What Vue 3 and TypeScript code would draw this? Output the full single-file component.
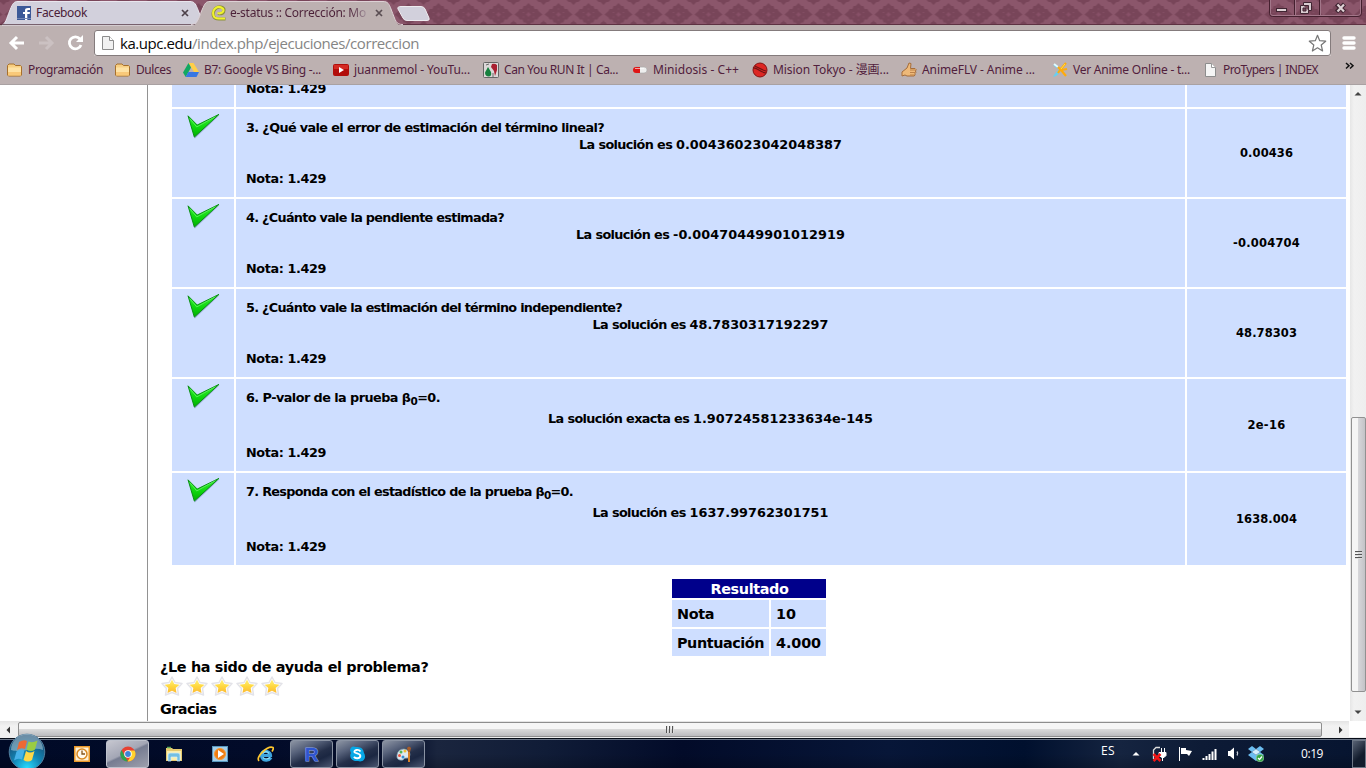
<script setup lang="ts">
import type { Directive } from 'vue'

// Adjusts tracking so that a label occupies the given width in pixels.
const vFit: Directive<HTMLElement, number> = {
  mounted(el, binding) {
    const count = (el.textContent ?? '').length
    const natural = el.getBoundingClientRect().width
    if (count > 0) el.style.letterSpacing = `${(binding.value - natural) / count}px`
  },
}

interface Question {
  title: string
  beta?: boolean
  titleWidth: number
  label: string
  labelWidth: number
  value: string
  valueWidth: number
  answer: string
  answerWidth: number
}

const questions: Question[] = [
  { title: '3. ¿Qué vale el error de estimación del término lineal?', titleWidth: 358, label: 'La solución es ', labelWidth: 97, value: '0.00436023042048387', valueWidth: 166, answer: '0.00436', answerWidth: 53 },
  { title: '4. ¿Cuánto vale la pendiente estimada?', titleWidth: 258, label: 'La solución es ', labelWidth: 97, value: '-0.00470449901012919', valueWidth: 172, answer: '-0.004704', answerWidth: 67 },
  { title: '5. ¿Cuánto vale la estimación del término independiente?', titleWidth: 376, label: 'La solución es ', labelWidth: 97, value: '48.7830317192297', valueWidth: 139, answer: '48.78303', answerWidth: 61 },
  { title: '6. P-valor de la prueba ', beta: true, titleWidth: 194, label: 'La solución exacta es ', labelWidth: 145, value: '1.90724581233634e-145', valueWidth: 180, answer: '2e-16', answerWidth: 38 },
  { title: '7. Responda con el estadístico de la prueba ', beta: true, titleWidth: 327, label: 'La solución es ', labelWidth: 97, value: '1637.99762301751', valueWidth: 139, answer: '1638.004', answerWidth: 61 },
]

const bookmarks = [
  { icon: 'folder', text: 'Programación', width: 75 },
  { icon: 'folder', text: 'Dulces', width: 35 },
  { icon: 'drive', text: 'B7: Google VS Bing -...', width: 117 },
  { icon: 'youtube', text: 'juanmemol - YouTu...', width: 116 },
  { icon: 'run', text: 'Can You RUN It | Ca...', width: 114 },
  { icon: 'pill', text: 'Minidosis - C++', width: 86 },
  { icon: 'ball', text: 'Mision Tokyo - 漫画...', width: 116 },
  { icon: 'thumb', text: 'AnimeFLV - Anime ...', width: 113 },
  { icon: 'spark', text: 'Ver Anime Online - t...', width: 117 },
  { icon: 'page', text: 'ProTypers | INDEX', width: 95 },
]
</script>

<template>
  <div class="screen">
    <header class="frame">
      <svg class="damask" width="1366" height="25">
        <defs>
          <pattern id="damask" width="30" height="25" patternUnits="userSpaceOnUse" x="3.5">
            <rect width="30" height="25" fill="#8b566b" />
            <path d="M15 3l3 3h2l1 3h3l1 2 4 3.500-4 3-1 2h-3l-1 3h-2l-3 3-3-3h-2l-1-3H6l-1-2-4-3 4-3.500 1-2h3l1-3h2z" fill="#784559" />
            <path d="M15 12.500l2 2-2 2-2-2zM9 12.500h2M19 12.500h2M9 17h2M19 17h2M15 8v2M15 19v2" fill="#875067" stroke="#875067" stroke-width=".7" />
            <path d="M-7 0h14l-2 2h-2l-3 3-3-3h-2zM23 0h14l-2 2h-2l-3 3-3-3h-2zM-4 25l2-3h1l1-2 1 2h1l2 3zM26 25l2-3h1l1-2 1 2h1l2 3z" fill="#784559" />
          </pattern>
        </defs>
        <rect width="1366" height="25" fill="url(#damask)" />
        <path d="M0 24.500H1366" stroke="#5e3142" />
      </svg>
      <svg class="tab-shapes" width="440" height="26" viewBox="0 0 440 26">
        <path d="M2 25C6 23 6 20 10 10 13 3 14 1.500 18 1.500H190C195 1.500 196 5 198 10L204 25z" fill="#d2d0dc" stroke="#e9e6ee" />
        <path d="M2 24.500H204" stroke="#77616d" />
        <path d="M191 26C197 25 198 21 202 10 205 3 206 1.500 210 1.500H383C388 1.500 389 4 391 9 396 22 396 25 403 26z" fill="#bdb1b1" />
        <path d="M191 24.500C197 24 198 20 202 10 205 3 206 1.500 210 1.500H383C388 1.500 389 4 391 9 396 22 396 24.500 403 24.500" fill="none" stroke="#ddd1d5" />
        <path d="M401 6.500H421Q424 6.500 425 9L429 18Q430 20.500 427 20.500H407Q404 20.500 403 18L398 9Q397 6.500 401 6.500z" fill="#d2d0dc" stroke="#eeebef" />
      </svg>
      <div class="tab first">
        <svg width="14" height="14"><rect width="14" height="14" fill="#3b5998" /><path d="M8 14V8H6V6h2V4.500C8 2.700 9 2 11 2h2v2h-1.500c-1 0-1.200.4-1.200 1v1H13l-.3 2h-2.400v6z" fill="#fff" /><path d="M0 12.500h14" stroke="#7286b5" /></svg>
        <span v-fit="51" class="tab-name">Facebook</span>
        <svg class="close" width="8" height="8"><path d="M1 1l6 6M7 1L1 7" stroke="#4d414a" stroke-width="1.700" /></svg>
      </div>
      <div class="tab second">
        <svg width="16" height="16"><path d="M7 8.500c4 1 6-1 6-3.500S9 1 6 2.500 1.500 8 2.500 11 6 14 8 14h6.500" fill="none" stroke="#8d9238" stroke-width="3.200" /><path d="M6.500 8c4 1 6-1 6-3S8.500 1 5.500 2.500 1.500 7.500 2.500 10.500 6 13.500 8 13.500h6" fill="none" stroke="#f0f22d" stroke-width="2.200" /></svg>
        <span v-fit="136" class="tab-name faded">e-status :: Corrección: Mo</span>
        <svg class="close" width="8" height="8"><path d="M1 1l6 6M7 1L1 7" stroke="#5a4e53" stroke-width="1.700" /></svg>
      </div>
      <svg class="window-buttons" width="94" height="18">
        <path d="M.5 0V13.500Q.5 16.500 3.500 16.500H89Q92.500 16.500 92.500 13.500V0M25.500 0V16M50.500 0V16" fill="none" stroke="#45202f" />
        <path d="M1.500 0V13.500Q1.500 15.500 4 15.500H88Q91.500 15.500 91.500 13V0M26.500 0V15M51.500 0V15" fill="none" stroke="#a27689" />
        <rect x="7.500" y="8.500" width="10" height="3" fill="#dfd2d6" stroke="#402532" />
        <path d="M34.500 2.500h8v8h-3v3h-8v-8h3z" fill="#d9ccd1" stroke="#402532" /><path d="M34.500 5.500h5v5M34 8h3v3h-3z" fill="#77495a" stroke="#402532" />
        <path d="M67.500 4l8 8M75.500 4l-8 8" stroke="#402532" stroke-width="4.500" /><path d="M68.500 4.500l6.500 7M75 4.500l-6.500 7" stroke="#dfd2d6" stroke-width="2.200" />
      </svg>
    </header>

    <div class="toolbar">
      <svg class="nav" width="90" height="24">
        <path d="M18 12H5M11 6l-6 6 6 6" transform="translate(8)" fill="none" stroke="#fff" stroke-width="3" />
        <path d="M41 12h13M48 6l6 6-6 6" fill="none" stroke="#cbc1c2" stroke-width="3" />
        <path d="M82 8a6 6 0 1 0 1 6" fill="none" stroke="#fff" stroke-width="2.800" /><path d="M85 4v7h-7z" fill="#fff" />
      </svg>
      <div class="address">
        <svg width="12" height="16"><path d="M.5 1.500h7l4 4v9H.5z" fill="#f1f1f1" stroke="#8c8c8c" /><path d="M7.500 1.500v4h4" fill="#fff" stroke="#8c8c8c" /></svg>
        <span v-fit="299" class="url"><b>ka.upc.edu</b>/index.php/ejecuciones/correccion</span>
        <svg class="star" width="19" height="19"><path d="M9.500 1.300L11.700 6.700L17.700 7.200L13.200 11L14.600 17L9.500 13.800L4.400 17L5.800 11L1.300 7.200L7.300 6.700z" fill="#fff" stroke="#777" stroke-linejoin="round" stroke-width="1.200" /></svg>
      </div>
      <svg class="menu" width="14" height="16"><path d="M2 3h10M2 8h10M2 13h10" stroke="#fff" stroke-width="3.400" stroke-linecap="round" /></svg>
    </div>

    <nav class="bookmarks">
      <div v-for="b in bookmarks" :key="b.text" class="bookmark">
        <svg width="16" height="16" viewBox="0 0 16 16">
          <template v-if="b.icon === 'folder'"><path d="M.5 13V3.500L2 2h5l1.500 1.500h5l1 1V13l-1 1h-12z" fill="#f8cf82" stroke="#a6702d" /><path d="M1 5.500h13V13H1z" fill="#fee2a4" /><path d="M1 10h13v3.500H1z" fill="#f9c979" /></template>
          <template v-else-if="b.icon === 'drive'"><path d="M5.500 1h5L16 10h-5z" fill="#ffcf48" /><path d="M5.500 1L8 5.500 2.700 15 0 10.500z" fill="#11a861" /><path d="M5.300 10H16l-2.500 5H2.700z" fill="#3777e3" /></template>
          <template v-else-if="b.icon === 'youtube'"><rect y="2" width="16" height="12" rx="2" fill="#b20e0b" /><path d="M1 3h14v4H1z" fill="#d42b24" /><path d="M6 5v6l5-3z" fill="#fff" /></template>
          <template v-else-if="b.icon === 'run'"><rect x=".5" y=".5" width="15" height="15" rx="1" fill="#dcd8d8" stroke="#656565" /><path d="M9 2q3-1 5 1v5l-2 6-1-5-3-4z" fill="#a91f31" /><path d="M5 5l3 5q1 4-2 4.500-4 0-4-4z" fill="#16803d" /><path d="M10 11v4M3 3l3-1" stroke="#686868" /></template>
          <template v-else-if="b.icon === 'pill'"><rect x="1" y="5" width="14" height="6" rx="3" fill="#eee" stroke="#aaa" stroke-width=".6" /><path d="M8 5H4a3 3 0 0 0 0 6h4z" fill="#df1515" /><path d="M3 6.500h9" stroke="#fff" opacity=".6" /></template>
          <template v-else-if="b.icon === 'ball'"><circle cx="8" cy="8" r="7" fill="#dd2723" stroke="#861313" /><path d="M1 6c4-1 6 4 13 5M3 4c4 2 7 4 11 5" fill="none" stroke="#701414" stroke-width="1.100" /></template>
          <template v-else-if="b.icon === 'thumb'"><path d="M1 10l5-4 2-5 2 .5-.5 5H14q2 1 .5 2.500 1 1.500-.5 2.500.5 2-1 2.500H6l-2-1-3 1z" fill="#eeb979" stroke="#a56d3a" /><path d="M9 8h5M9 10.500h5M9 13h4" stroke="#bd8149" /></template>
          <template v-else-if="b.icon === 'spark'"><path d="M1 3c4 0 5 4 5 5-2 2-4 5-5 7 5-1 6-4 7-6" fill="#68cff0" /><path d="M2 2l4 3" stroke="#e0faff" stroke-width="2" /><path d="M14 1L8 8M6 5l3 3 5 6M8 8l-2 3M9 8l6-1" stroke="#ffab0b" stroke-width="2.200" /><path d="M13 2L9 7" stroke="#ffe14b" /></template>
          <template v-else><path d="M3.500 1.500h6l4 4v9h-10z" fill="#f5f5f5" stroke="#8d8d8d" /><path d="M9.500 1.500v4h4" fill="#fff" stroke="#999" /></template>
        </svg>
        <span v-fit="b.width">{{ b.text }}</span>
      </div>
      <svg class="more" width="10" height="8"><path d="M1 1l3 2.700L1 6.500M5 1l3 2.700L5 6.500" fill="none" stroke="#111" stroke-width="1.500" /></svg>
    </nav>

    <div class="viewport">
      <aside />
      <main>
        <section class="corrections">
          <div class="row partial"><div /><div class="question"><span v-fit="80">Nota: 1.429</span></div><div /></div>
          <div v-for="q in questions" :key="q.title" class="row" :class="{ tall: q.beta }">
            <div class="mark">
              <svg width="35" height="29" viewBox="0 0 36 30">
                <defs><linearGradient id="green" x2="0" y2="1"><stop stop-color="#37ec37" /><stop offset=".5" stop-color="#11dc11" /><stop offset="1" stop-color="#00ae00" /></linearGradient></defs>
                <path d="M3 7L9 28.500L35 4L13 18z" fill="#58759b" opacity=".5" />
                <path d="M2 5L11.500 14.500L34 3.500L8.500 27z" fill="url(#green)" stroke="#078d12" stroke-linejoin="round" />
                <path d="M4 8l7 8.500L30 6" fill="none" stroke="#6af06a" stroke-width=".8" />
              </svg>
            </div>
            <div class="question">
              <div class="title"><span v-fit="q.titleWidth">{{ q.title }}<template v-if="q.beta">β<sub>0</sub>=0.</template></span></div>
              <div class="solution"><span v-fit="q.labelWidth">{{ q.label }}</span><span v-fit="q.valueWidth">{{ q.value }}</span></div>
              <div class="note"><span v-fit="80">Nota: 1.429</span></div>
            </div>
            <div class="answer"><span v-fit="q.answerWidth">{{ q.answer }}</span></div>
          </div>
        </section>
        <section class="result">
          <div class="heading"><span v-fit="78">Resultado</span></div>
          <div><span v-fit="37">Nota</span></div><div><span v-fit="20">10</span></div>
          <div><span v-fit="87">Puntuación</span></div><div><span v-fit="45">4.000</span></div>
        </section>
        <section class="feedback">
          <div><span v-fit="268.5">¿Le ha sido de ayuda el problema?</span></div>
          <div class="stars">
            <svg v-for="n in 5" :key="n" width="25" height="22" viewBox="0 0 25 22">
              <defs><linearGradient id="gold" x2="0" y2="1"><stop stop-color="#fff17d" /><stop offset=".5" stop-color="#ffd840" /><stop offset="1" stop-color="#fbb934" /></linearGradient></defs>
              <path d="M12 1L15 6.500L22 7.500L17.500 12.500L18.500 19L12 16.500L5.500 19L6.500 12.500L2 7.500L9 6.500z" fill="#fff" stroke="#e3e3e8" stroke-width="1.500" stroke-linejoin="round" />
              <path d="M12 3.500L14.300 8L19.500 8.700L15.700 12L16.500 17L12 14.800L7.500 17L8.300 12L4.500 8.700L9.700 8z" fill="url(#gold)" />
            </svg>
          </div>
          <div class="thanks"><span v-fit="56.500">Gracias</span></div>
        </section>
      </main>
      <div class="vscroll">
        <svg class="up" width="8" height="5"><path d="M.5 4.500L4 1 7.500 4.500z" fill="#444" /></svg>
        <div class="vthumb"><i /><i /><i /></div>
        <svg class="down" width="8" height="5"><path d="M.5 .5L4 4 7.500 .5z" fill="#444" /></svg>
      </div>
    </div>
    <div class="hscroll">
      <svg width="5" height="8"><path d="M4 .5L.5 4 4 7.500z" fill="#333" /></svg>
      <div class="hthumb"><i /><i /><i /></div>
      <svg width="5" height="8"><path d="M1 .5L4.500 4 1 7.500z" fill="#333" /></svg>
      <div class="corner" />
    </div>

    <footer class="taskbar">
      <svg class="orb" width="40" height="36" viewBox="0 0 40 36">
        <defs><radialGradient id="orb" cx=".5" cy=".95" r=".9"><stop stop-color="#28dcff" /><stop offset=".45" stop-color="#1386b5" /><stop offset="1" stop-color="#18456c" /></radialGradient></defs>
        <circle cx="20" cy="19" r="17.800" fill="url(#orb)" stroke="#527f9f" />
        <path d="M4 17a16 16 0 0 1 32 0c-10-4-20 4-32 0" fill="#bed6df" opacity=".5" />
        <path d="M12 9q5-3 8-1l-2 8q-4-2-8 1z" fill="#ed6934" /><path d="M21.500 8.500q4 2 9-1l-2.500 9q-4 3-8.500 0z" fill="#9acd43" /><path d="M9.500 18.500q4-3 8-1l-2.500 9q-4-2-8 1z" fill="#46b2e9" /><path d="M19 18q4 3 8.500 0L25 27q-4 3-8.500 0z" fill="#ffd748" />
      </svg>
      <div class="apps">
        <div class="app"><svg width="16" height="16"><rect x=".5" y=".5" width="15" height="15" fill="#fff1d5" stroke="#e99728" stroke-width="2" /><circle cx="8" cy="8" r="5" fill="#fff9ed" stroke="#d98922" stroke-width="1.500" /><path d="M8 4.500V8h3" fill="none" stroke="#85541c" stroke-width="1.300" /></svg></div>
        <div class="app open chrome"><svg width="16" height="16"><circle cx="8" cy="8" r="7.500" fill="#e64132" /><path d="M1.500 4L5 10.500 8 15.500A7.500 7.500 0 0 1 1.500 4z" fill="#2ca44f" /><path d="M8 4.500h6.600A7.500 7.500 0 0 1 7.500 15.500L11 10z" fill="#ffd32d" /><circle cx="8" cy="8" r="3.800" fill="#fff" /><circle cx="8" cy="8" r="2.900" fill="#3e83d6" /></svg></div>
        <div class="app"><svg width="18" height="16"><path d="M1 2h6l1 1h9v12H1z" fill="#e6ca70" /><path d="M2 5h14v9H2z" fill="#fbeeac" /><path d="M2 1.500h4" stroke="#58a656" stroke-width="1.500" /><path d="M3 15V9q0-2 2-2h8q2 0 2 2v6h-3v-4H6v4z" fill="#73bfe3" stroke="#d4effb" stroke-width=".7" /></svg></div>
        <div class="app"><svg width="16" height="16"><rect x=".5" y=".5" width="15" height="15" fill="#a5cfea" stroke="#5998bf" /><circle cx="8" cy="8" r="5.500" fill="#f07c11" stroke="#f69a31" /><path d="M6 4v8l6-4z" fill="#fff" /></svg></div>
        <div class="app"><svg width="17" height="17"><path d="M14 11.500c-2 3-7 4-9 0-2-5 2-7 5-6 3 1 3.500 2 3.500 4H5.500" fill="none" stroke="#3fa5dd" stroke-width="3.200" /><path d="M13 11.500c-2 2-6 2-7 0M6 7.500c2-3 5-2 6 0" fill="none" stroke="#8fe0f8" stroke-width="1.200" /><path d="M2 15C-2 11 11-1 16 1.500c1 1 0 2-1 4" fill="none" stroke="#ffc72e" stroke-width="1.700" /></svg></div>
        <div class="app open"><span class="r-logo">R</span></div>
        <div class="app open"><svg width="17" height="17"><path d="M1 4Q2-1 7 1q7-1 8 6c3 5-1 10-6 8-7 1-9-5-7-8z" fill="#07a8e6" /><path d="M11.500 5.500Q10 3.500 7.500 4 5 4.500 5.500 6.300c.3 1 5.500 1 5.800 3.400.3 3-5 3.500-6.300 1" fill="none" stroke="#fff" stroke-width="1.900" /></svg></div>
        <div class="app open"><svg width="18" height="17"><path d="M2 9q1-6 7-6 6 1 6 6-1 4-4 3-2 0-3 2-7 1-6-5z" fill="#dfe9ee" stroke="#7d9db3" stroke-width=".7" /><circle cx="6" cy="6" r="1.500" fill="#4eb558" /><circle cx="10" cy="5" r="1.500" fill="#f2be30" /><circle cx="4.500" cy="9.500" r="1.500" fill="#ea5441" /><circle cx="8" cy="11" r="1.500" fill="#348dd0" /><path d="M14 1v15" stroke="#d98127" stroke-width="2" /><path d="M12 2q2-3 4 0l-1 4h-2z" fill="#a65c2a" /></svg></div>
      </div>
      <div class="tray">
        <span v-fit="14" class="lang">ES</span>
        <svg width="8" height="5"><path d="M.5 4.500L4 1 7.500 4.500z" fill="#fff" /></svg>
        <svg width="16" height="16"><path d="M8 1.500H4L1.500 4v9" stroke="#ddd" fill="none" stroke-width="1.300" /><path d="M7 6.500h7v3l-2 2h-2l-3-2zM9.500 2v4M12.500 2v4M10.500 12v3" stroke="#fff" fill="#fff" /><path d="M1.500 8l7 7M8.500 8l-7 7" stroke="#ef1515" stroke-width="2.500" /></svg>
        <svg width="15" height="15"><path d="M1.500 1v14" stroke="#fff" /><path d="M3 2h5v2l6 1-3 5-2-2H3z" fill="#fff" /></svg>
        <svg width="15" height="12"><path d="M1.500 10v2M4.500 8v4M7.500 6v6M10.500 3.500v8.500M13.500 1v11" stroke="#fff" stroke-width="2" /></svg>
        <svg width="14" height="15"><path d="M2 5h2l4-3.500v12L4 10H2z" fill="#fff" /><path d="M11 5.500q1.500 2 0 4" fill="none" stroke="#ccd2dc" stroke-width="1.300" /></svg>
        <svg width="16" height="16"><path d="M4 0l4 3-4 3-4-3zM12 0l4 3-4 3-4-3zM4 6l4 3-4 3-4-3zM12 6l4 3-4 3-4-3zM8 9l4 3-4 3-4-3z" fill="#6bbdf1" /><path d="M4 6l4-3 4 3-4 3z" fill="#d4efff" /><circle cx="12" cy="12" r="3.800" fill="#32a545" stroke="#a6dda7" stroke-width=".6" /><path d="M10 12l1.500 1.500L14 10.500" fill="none" stroke="#fff" stroke-width="1.300" /></svg>
        <span v-fit="22" class="clock">0:19</span>
      </div>
      <div class="show-desktop" />
    </footer>
  </div>
</template>

<style>
html, body { margin: 0; overflow: hidden; }
</style>

<style scoped>
* { box-sizing: border-box; }
svg { display: block; flex: none; }
span { display: inline-block; white-space: pre; }
.screen { width: 1366px; height: 768px; overflow: hidden; display: flex; flex-direction: column; font-family: "Noto Sans", "Noto Sans CJK JP", sans-serif; font-size: 12px; background: #fff; }
.frame { height: 25px; flex: none; position: relative; display: flex; background: #8b566b; }
.damask, .tab-shapes { position: absolute; left: 0; top: 0; }
.tab-shapes { z-index: 1; }
.tab { position: relative; z-index: 2; display: flex; align-items: center; height: 26px; padding-left: 17px; color: #4b2138; }
.first { width: 194px; }
.second { width: 210px; }
.tab-name { margin-left: 5px; line-height: 24px; }
.second .tab-name { margin-left: 3px; }
.faded { background: linear-gradient(90deg, #4b2138 88%, #a3929c); background-clip: text; color: transparent; }
.close { margin-left: auto; margin-right: 5px; }
.second .close { margin-right: 21px; }
.window-buttons { position: absolute; right: 3px; top: 0; }
.toolbar { height: 31px; flex: none; display: flex; align-items: flex-start; background: #bdb1b1; padding-top: 5px; }
.nav { margin-left: -2px; margin-top: 1px; }
.address { display: flex; align-items: center; margin-left: 6px; width: 1237px; height: 26px; border: 1px solid #847b7c; border-radius: 3px; background: #fff; padding: 0 3px 0 7px; box-shadow: 0 1px #d9d1d1; }
.url { margin-left: 6px; color: #858585; font-family: "Open Sans", sans-serif; font-size: 15px; line-height: 24px; }
.url b { color: #080808; font-weight: 400; }
.star { margin-left: auto; }
.menu { margin: 5px 0 0 11px; }
.bookmarks { height: 29px; flex: none; position: relative; display: grid; grid-template-columns: 108px 68px 150px 150px 149px 120px 149px 151px 150px 130px; padding-left: 7px; align-items: center; background: #bdb1b1; border-bottom: 1px solid #a9a1a2; color: #51203c; font-size: 12px; }
.bookmark { display: flex; align-items: center; gap: 5px; height: 26px; line-height: 20px; }
.more { position: absolute; right: 11px; top: 6px; }
.viewport { height: 636px; flex: none; display: flex; }
aside { width: 148px; border-right: 1px solid #929292; }
main { width: 1202px; padding-left: 12px; font-family: "DejaVu Sans", Verdana, sans-serif; font-size: 12.8px; font-weight: 700; color: #000; }
.corrections { margin-left: 12px; width: 1174px; display: flex; flex-direction: column; gap: 2px; }
.row { height: 88px; display: grid; grid-template-columns: 62px 949px 159px; gap: 2px; }
.row > div { background: #cedeff; overflow: hidden; }
.row.tall { height: 92px; }
.row.partial { height: 22px; }
.question { padding: 10px; line-height: 17px; }
.row.partial .question { padding-top: 0; line-height: 7px; }
.title { height: 17px; }
.tall .title { height: 21px; }
.title span { height: 17px; }
sub { font-size: 10.500px; line-height: 0; vertical-align: -3px; }
.solution { text-align: center; height: 34px; }
.mark { padding: 2px 0 0 14px; }
.answer { display: flex; align-items: center; justify-content: center; font-size: 11.500px; line-height: 14px; padding-bottom: 1px; }
.result { width: 154px; margin: 14px 0 0 512px; display: grid; grid-template-columns: 97px 55px; grid-template-rows: 19px 27px 27px; gap: 2px; font-size: 14.400px; }
.result > div { background: #cedeff; padding-left: 5px; line-height: 28px; overflow: hidden; }
.result .heading { grid-column: 1 / 3; background: #00008b; color: #fff; line-height: 20px; padding: 0 0 0 1px; text-align: center; }
.feedback { font-size: 14.400px; line-height: 19px; padding-top: 2px; }
.stars { display: flex; height: 22px; margin-top: -1px; }
.thanks { margin-top: 2px; }
.vscroll { width: 16px; height: 636px; background: linear-gradient(90deg, #e6e6e6, #f1f1f1 25%, #eeeeee); display: flex; flex-direction: column; align-items: center; }
.up { margin-top: 6px; }
.vthumb { margin-top: 321px; width: 15px; height: 275px; border: 1px solid #919191; border-radius: 2px; background: linear-gradient(90deg, #f5f5f5 0 45%, #d6d6d9 50%, #c3c3c7); display: flex; flex-direction: column; align-items: center; justify-content: center; gap: 1px; }
.vthumb i { height: 2px; width: 7px; border-top: 1px solid #555; border-bottom: 1px solid #ddd; }
.down { margin-top: 18px; }
.hscroll { height: 17px; flex: none; display: flex; align-items: center; padding-left: 6px; background: linear-gradient(#e4e4e4, #f2f2f2 30%, #eee); position: relative; }
.hthumb { width: 1304px; height: 15px; margin-left: 7px; margin-right: 16px; border: 1px solid #8e8e8e; border-radius: 2px; background: linear-gradient(#f6f6f6 0 45%, #d9d9d9 50%, #bcbcbf); display: flex; align-items: center; justify-content: center; gap: 1px; }
.hthumb i { width: 2px; height: 7px; border-left: 1px solid #555; border-right: 1px solid #ddd; }
.corner { position: absolute; right: 0; top: 0; width: 17px; height: 16px; background: #fff; }
.taskbar { height: 30px; flex: none; position: relative; display: flex; background: linear-gradient(#0000 50%, #0003), linear-gradient(90deg, #000a27 0, #020b29 20%, #07112d 30%, #1a253e 32%, #101c37 40%, #020b29 50%, #071638 65%, #00102e 75%, #152440 82%, #0d1b36 88%, #061430 100%); border-top: 1px solid #050b16; box-shadow: inset 0 1px #6d7788; }
.orb { position: absolute; left: 7px; top: -6px; }
.apps { display: flex; margin-left: 60px; gap: 3px; padding-top: 1px; }
.app { width: 43px; height: 28px; display: flex; align-items: center; justify-content: center; }
.open { border: 1px solid #8a93a3; border-radius: 3px; background: linear-gradient(155deg, #8d95a4 0, #56617a 30%, #242f49 55%, #1b2742 70%, #4b5670 100%); }
.chrome { background: linear-gradient(155deg, #c6c7d0 0, #a3a6b5 45%, #767c91 50%, #9da0ad 100%); border-color: #bec2cd; }
.r-logo { font: 700 19px/25px "Liberation Sans", sans-serif; color: #2f55cf; -webkit-text-stroke: 1px #8fa6ef; paint-order: stroke fill; }
.tray { position: absolute; left: 1101px; top: 0; height: 29px; display: grid; grid-template-columns: 31px 20px 26px 24px 24px 22px 52px 30px; align-items: center; color: #fff; font-family: "Open Sans", sans-serif; font-size: 12px; }
.lang { margin-top: -6px; justify-self: start; }
.clock { justify-self: start; margin-left: 1px; }
.show-desktop { position: absolute; right: 0; top: 1px; width: 14px; height: 28px; border: 1px solid #6c7685; background: linear-gradient(135deg, #596375, #111b2c 60%); }
</style>
